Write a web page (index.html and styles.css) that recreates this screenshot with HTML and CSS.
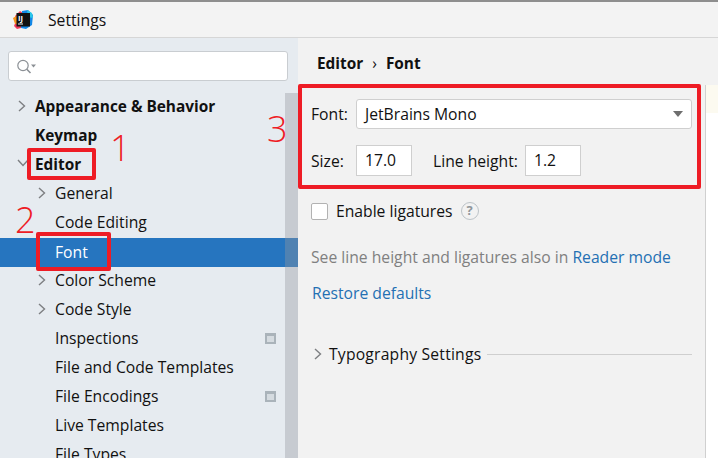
FILE: index.html
```html
<!DOCTYPE html>
<html lang="en">
<head>
    <meta charset="UTF-8">
    <meta name="viewport" content="width=device-width, initial-scale=1.0">
    <title>Settings</title>
    <link rel="stylesheet" href="styles.css">
</head>
<body>
    <!-- Title bar -->
    <header class="titlebar">
        <svg class="app-logo" width="20" height="20" viewBox="0 0 20 20">
            <path d="M2 6 L7 1 L10 3 L8 18 L4 19 L1 16 L3 11 Z" fill="#f2385a"/>
            <path d="M0 8 L5 5 L5 14 L2 14 Z" fill="#f7931e"/>
            <path d="M9 1 L15 0 L20 5 L19 15 L13 19 L8 18 Z" fill="#1287e6"/>
            <path d="M14 0 L19 3 L20 8 L15 7 Z" fill="#2cc8e8"/>
            <rect x="3.5" y="3" width="13.5" height="13.5" fill="#111"/>
            <text x="5" y="10.5" class="logo-text">IJ</text>
            <rect x="5" y="13.5" width="5" height="1" fill="#eee"/>
        </svg>
        <span class="window-title">Settings</span>
    </header>

    <div class="main">
        <!-- Left tree -->
        <aside class="sidebar">
            <div class="search-box">
                <svg width="22" height="18" viewBox="0 0 22 18">
                    <circle cx="7" cy="7.5" r="5.2" fill="none" stroke="#8b9095" stroke-width="1.2"/>
                    <path d="M10.8 11.2 L14.5 15" stroke="#8b9095" stroke-width="1.6"/>
                    <path d="M15 6.5 L20 6.5 L17.5 9.5 Z" fill="#8b9095"/>
                </svg>
            </div>
            <div class="tree-wrap">
                <ul class="tree">
                    <li class="row bold"><svg class="chev" width="10" height="12" viewBox="0 0 10 12"><path d="M2 1 L7.5 6 L2 11"/></svg>Appearance &amp; Behavior</li>
                    <li class="row bold">Keymap</li>
                    <li class="row bold"><svg class="chev" width="12" height="10" viewBox="0 0 12 10"><path d="M1 2 L6 7.5 L11 2"/></svg>Editor</li>
                    <li class="row sub"><svg class="chev" width="10" height="12" viewBox="0 0 10 12"><path d="M2 1 L7.5 6 L2 11"/></svg>General</li>
                    <li class="row sub">Code Editing</li>
                    <li class="row sub selected">Font</li>
                    <li class="row sub"><svg class="chev" width="10" height="12" viewBox="0 0 10 12"><path d="M2 1 L7.5 6 L2 11"/></svg>Color Scheme</li>
                    <li class="row sub"><svg class="chev" width="10" height="12" viewBox="0 0 10 12"><path d="M2 1 L7.5 6 L2 11"/></svg>Code Style</li>
                    <li class="row sub">Inspections<span class="scope-icon"></span></li>
                    <li class="row sub">File and Code Templates</li>
                    <li class="row sub">File Encodings<span class="scope-icon"></span></li>
                    <li class="row sub">Live Templates</li>
                    <li class="row sub">File Types</li>
                </ul>
                <div class="scrollbar"></div>
            </div>
        </aside>

        <!-- Settings content -->
        <section class="content">
            <div class="breadcrumb">Editor <span class="crumb-sep">›</span> Font</div>
            <div class="content-body">
                <div class="form">
                    <div class="field-row">
                        <label class="field-label">Font:</label>
                        <div class="select">JetBrains Mono<span class="select-arrow"></span></div>
                    </div>
                    <div class="field-row size-row">
                        <label class="field-label">Size:</label>
                        <div class="input">17.0</div>
                        <label class="lh-label">Line height:</label>
                        <div class="input">1.2</div>
                    </div>
                    <div class="check-row">
                        <span class="checkbox"></span>
                        <span>Enable ligatures</span>
                        <span class="help">?</span>
                    </div>
                    <p class="hint">See line height and ligatures also in <a>Reader mode</a></p>
                    <p class="restore"><a>Restore defaults</a></p>
                    <div class="typography">
                        <svg class="chev" width="10" height="12" viewBox="0 0 10 12"><path d="M2 1 L7.5 6 L2 11"/></svg>
                        <span class="typography-title">Typography Settings</span>
                        <span class="rule"></span>
                    </div>
                </div>
                <div class="preview"><div class="caret-line"></div></div>
            </div>
        </section>
    </div>

    <!-- Red annotations drawn over the screenshot -->
    <div class="mark mark-editor"></div>
    <div class="mark mark-font"></div>
    <div class="mark mark-form"></div>
    <span class="num num-1">1</span>
    <span class="num num-2">2</span>
    <span class="num num-3">3</span>
</body>
</html>
```

FILE: styles.css
```css
* {
    margin: 0;
    padding: 0;
    box-sizing: border-box;
}

body, html {
    width: 100%;
    height: 100%;
    overflow: hidden;
    font-family: "Open Sans", sans-serif;
    font-size: 15.7px;
    color: #111;
    background: #f2f2f2;
}

body {
    display: flex;
    flex-direction: column;
}

/* Title bar */
.titlebar {
    height: 38px;
    flex: none;
    display: flex;
    align-items: center;
    gap: 15px;
    padding-left: 13px;
    background: #f3f3f3;
    border-top: 2px solid #8e8e8e;
    border-bottom: 1px solid #d6d6d6;
}

.logo-text {
    font-size: 7.5px;
    font-weight: 700;
    fill: #fff;
}

.main {
    flex: 1;
    display: flex;
    min-height: 0;
}

/* Left tree */
.sidebar {
    width: 298px;
    flex: none;
    background: #e6ebf0;
    padding-top: 13px;
    overflow: hidden;
}

.search-box {
    width: 280px;
    height: 30px;
    margin-left: 8px;
    padding: 6px 0 0 7px;
    background: #fff;
    border: 1px solid #c9cdd1;
    border-radius: 3px;
}

.tree-wrap {
    position: relative;
    margin-top: 12px;
}

.tree {
    list-style: none;
}

.row {
    position: relative;
    height: 29px;
    line-height: 27px;
    padding-left: 35px;
    white-space: nowrap;
}

.row.bold {
    font-weight: 700;
    font-size: 15.4px;
}

.row.sub {
    padding-left: 55px;
}

.row .chev {
    position: absolute;
    left: 17px;
    top: 7px;
}

.row.sub .chev {
    left: 37px;
}

.row.selected {
    background: #2675bf;
    color: #fff;
    line-height: 28px;
}

.chev path {
    fill: none;
    stroke: #7d7f82;
    stroke-width: 1.4;
}

.scope-icon {
    position: absolute;
    left: 265px;
    top: 8px;
    width: 11px;
    height: 11px;
    background: #d5dbe0;
    border: 2px solid #aab3ba;
    border-top-width: 3px;
}

.scrollbar {
    position: absolute;
    top: 0;
    right: 0;
    bottom: 0;
    width: 13px;
    background: rgba(150, 152, 158, 0.38);
}

/* Settings content */
.content {
    flex: 1;
    min-width: 0;
    display: flex;
    flex-direction: column;
}

.breadcrumb {
    height: 47px;
    flex: none;
    padding: 16px 0 0 19px;
    font-weight: 700;
    font-size: 15.4px;
    line-height: 20px;
    word-spacing: 2px;
}

.crumb-sep {
    font-weight: 400;
    margin: 0 3px;
}

.content-body {
    flex: 1;
    display: flex;
}

.form {
    width: 407px;
    flex: none;
    padding: 14px 13px 0 13px;
}

.preview {
    flex: 1;
    background: #fff;
    border-left: 1px solid #d0d0d0;
}

.caret-line {
    height: 28px;
    background: #fcfaf0;
}

.field-row {
    display: flex;
    align-items: center;
}

.field-label {
    width: 45px;
    flex: none;
}

.select {
    position: relative;
    flex: 1;
    height: 30px;
    line-height: 28px;
    padding-left: 8px;
    background: #fff;
    border: 1px solid #cfcfcf;
    border-radius: 3px;
}

.select-arrow {
    position: absolute;
    right: 8px;
    top: 11px;
    border-left: 5.5px solid transparent;
    border-right: 5.5px solid transparent;
    border-top: 6px solid #6e6e6e;
}

.size-row {
    margin-top: 16px;
}

.input {
    width: 56px;
    height: 31px;
    line-height: 29px;
    padding-left: 8px;
    background: #fff;
    border: 1px solid #cfcfcf;
}

.lh-label {
    width: 92px;
    margin-left: 21px;
}

.check-row {
    display: flex;
    align-items: center;
    height: 20px;
    margin-top: 25px;
}

.checkbox {
    width: 17px;
    height: 17px;
    margin-right: 8px;
    background: #fff;
    border: 1px solid #b2b2b2;
    border-radius: 2px;
}

.help {
    width: 18px;
    height: 18px;
    margin-left: 8px;
    border: 1.5px solid #bcc3c8;
    border-radius: 50%;
    color: #8f969b;
    font-size: 13px;
    font-weight: 700;
    line-height: 15px;
    text-align: center;
}

.hint {
    margin-top: 26px;
    line-height: 20px;
    color: #808080;
}

a {
    color: #2470b3;
}

.restore {
    margin-top: 16px;
    line-height: 20px;
    padding-left: 1px;
}

.typography {
    display: flex;
    align-items: center;
    gap: 6px;
    height: 20px;
    margin-top: 41px;
    padding-left: 2px;
}

.typography-title {
    letter-spacing: 0.2px;
}

.rule {
    flex: 1;
    height: 1px;
    background: #cfcfcf;
}

/* Annotations */
.mark {
    position: absolute;
    border: 4px solid #ee1c25;
    border-radius: 2px;
}

.mark-editor {
    left: 27px;
    top: 148px;
    width: 69px;
    height: 32px;
}

.mark-font {
    left: 36px;
    top: 232px;
    width: 75px;
    height: 39px;
}

.mark-form {
    left: 298px;
    top: 84px;
    width: 403px;
    height: 105px;
}

.num {
    position: absolute;
    color: #ee1c25;
    font-family: "Open Sans", sans-serif;
    font-weight: 300;
    font-size: 36px;
    line-height: 40px;
}

.num-1 {
    left: 110px;
    top: 128px;
}

.num-2 {
    left: 15px;
    top: 200px;
}

.num-3 {
    left: 267px;
    top: 109px;
}
```
